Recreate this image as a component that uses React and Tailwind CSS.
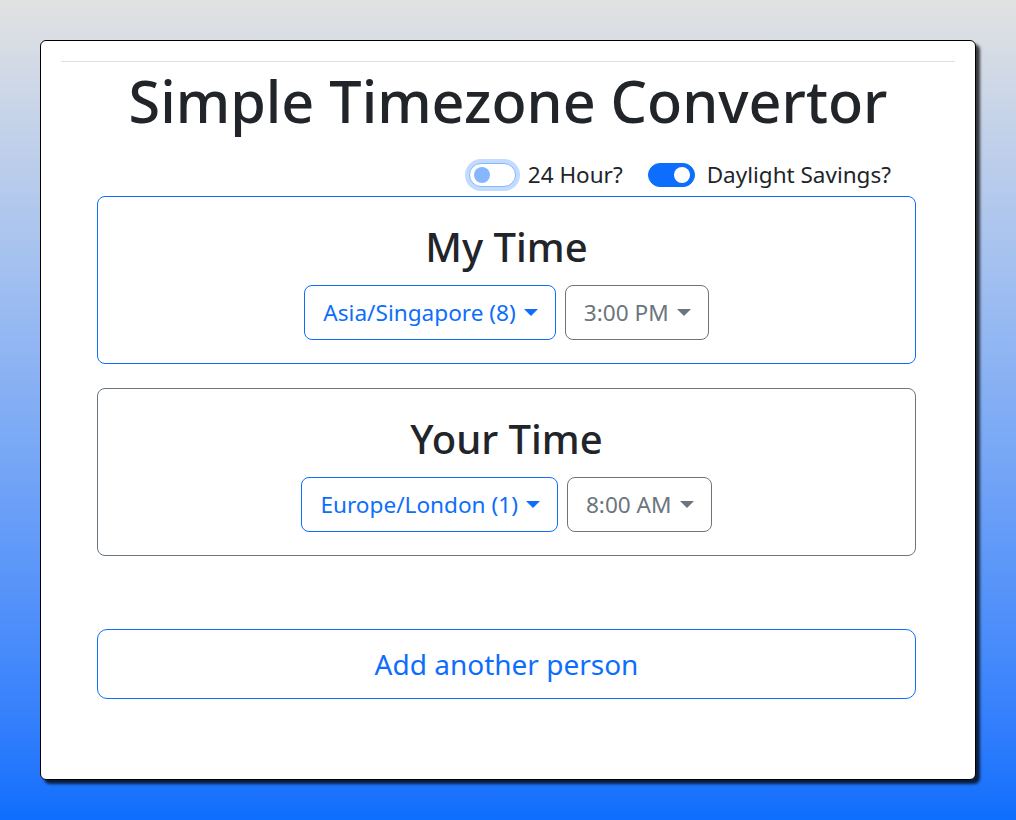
import React, { useState } from 'react';

const font = { fontFamily: '"Noto Sans", "Open Sans", sans-serif' };

const Caret = ({ color }) => (
  <svg width="14" height="8" viewBox="0 0 14 8" className="ml-2 mt-[1px]">
    <path d="M0 0 L14 0 L7 7 Z" fill={color} />
  </svg>
);

const Switch = ({ on, focused }) => (
  <span
    className={`relative inline-block w-[47px] h-[24px] rounded-full border ${
      on ? 'bg-[#0d6efd] border-[#0d6efd]' : 'bg-white border-[#86b7fe]'
    } ${focused ? 'shadow-[0_0_0_4px_rgba(13,110,253,0.25)]' : ''}`}
  >
    <span
      className={`absolute top-[3px] w-[16px] h-[16px] rounded-full ${
        on ? 'right-[4px] bg-white' : 'left-[4px] bg-[#86b7fe]'
      }`}
    />
  </span>
);

const PersonCard = ({ title, zone, time, active }) => (
  <div
    className={`h-[168px] rounded-[8px] border flex flex-col items-center pt-[26px] ${
      active ? 'border-[#0d6efd]' : 'border-[#6c757d]'
    }`}
  >
    <h2 className="text-[40px] leading-[48px] font-medium text-[#212529]">{title}</h2>
    <div className="flex gap-[9px] mt-[14px]">
      <button className="h-[55px] pl-[18px] pr-[17px] rounded-[8px] border border-[#0d6efd] text-[#0d6efd] text-[22.6px] flex items-center">
        {zone}
        <Caret color="#0d6efd" />
      </button>
      <button className="h-[55px] pl-[18px] pr-[17px] rounded-[8px] border border-[#6c757d] text-[#6c757d] text-[22.6px] flex items-center">
        {time}
        <Caret color="#6c757d" />
      </button>
    </div>
  </div>
);

export default function App() {
  const [people] = useState([
    { title: 'My Time', zone: 'Asia/Singapore (8)', time: '3:00 PM', active: true },
    { title: 'Your Time', zone: 'Europe/London (1)', time: '8:00 AM', active: false },
  ]);

  return (
    <div className="min-h-screen p-10 bg-linear-to-b from-[#e2e2e2] to-[#0d6efd]" style={font}>
      <div className="h-[740px] bg-white border border-black rounded-[6px] shadow-[4px_4px_3px_rgba(0,0,0,0.75)] px-5 pt-5">
        <hr className="border-t border-[#e0e0e0]" />
        <h1 className="text-center text-[57.5px] leading-[80px] font-medium text-[#212529] -mt-[1px]">
          Simple Timezone Convertor
        </h1>
        <div className="w-[819px] ml-[36px]">
          <div className="flex justify-end items-center pr-[25px] h-[36px] mt-[16px] mb-[3px] text-[22.5px] text-[#212529]">
            <Switch on={false} focused />
            <span className="ml-[12px] mr-[25px]">24 Hour?</span>
            <Switch on />
            <span className="ml-[12px]">Daylight Savings?</span>
          </div>
          <div className="flex flex-col gap-[24px]">
            {people.map((p) => (
              <PersonCard key={p.title} {...p} />
            ))}
          </div>
          <button className="w-full mt-[73px] h-[70px] rounded-[10px] border border-[#0d6efd] text-[#0d6efd] text-[28px]">
            Add another person
          </button>
        </div>
      </div>
    </div>
  );
}
